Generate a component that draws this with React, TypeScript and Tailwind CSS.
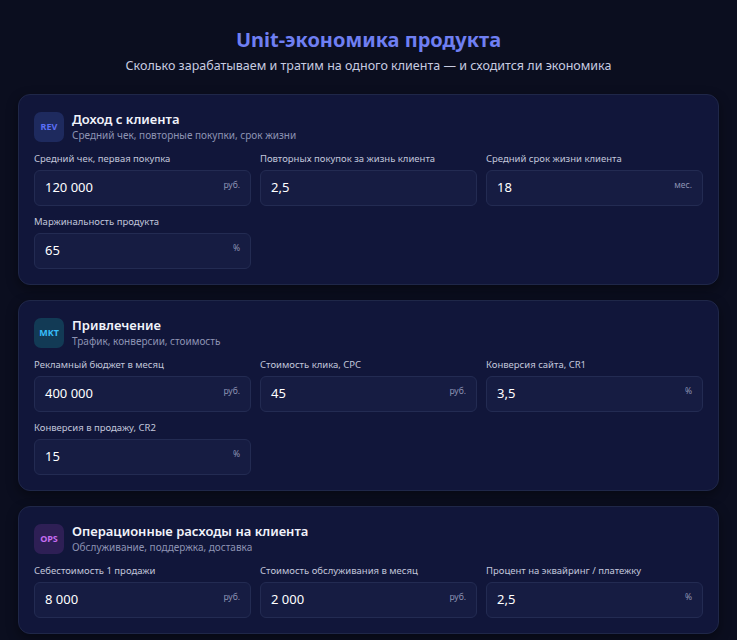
type Field = { label: string; value: string; unit?: string };
type Section = { tag: string; tagClass: string; title: string; sub: string; fields: Field[] };

const sections: Section[] = [
  {
    tag: "REV",
    tagClass: "bg-[#1e2a5e] text-[#5b6ef5]",
    title: "Доход с клиента",
    sub: "Средний чек, повторные покупки, срок жизни",
    fields: [
      { label: "Средний чек, первая покупка", value: "120 000", unit: "руб." },
      { label: "Повторных покупок за жизнь клиента", value: "2,5" },
      { label: "Средний срок жизни клиента", value: "18", unit: "мес." },
      { label: "Маржинальность продукта", value: "65", unit: "%" },
    ],
  },
  {
    tag: "MKT",
    tagClass: "bg-[#123a55] text-[#38bdf8]",
    title: "Привлечение",
    sub: "Трафик, конверсии, стоимость",
    fields: [
      { label: "Рекламный бюджет в месяц", value: "400 000", unit: "руб." },
      { label: "Стоимость клика, CPC", value: "45", unit: "руб." },
      { label: "Конверсия сайта, CR1", value: "3,5", unit: "%" },
      { label: "Конверсия в продажу, CR2", value: "15", unit: "%" },
    ],
  },
  {
    tag: "OPS",
    tagClass: "bg-[#2e1f55] text-[#c56cf0]",
    title: "Операционные расходы на клиента",
    sub: "Обслуживание, поддержка, доставка",
    fields: [
      { label: "Себестоимость 1 продажи", value: "8 000", unit: "руб." },
      { label: "Стоимость обслуживания в месяц", value: "2 000", unit: "руб." },
      { label: "Процент на эквайринг / платежку", value: "2,5", unit: "%" },
    ],
  },
];

export default function App() {
  return (
    <div className="min-h-[640px] bg-[#0b0e1f] font-['Noto_Sans',sans-serif] text-white pb-6">
      <div className="pt-[27px] text-center">
        <h1 className="text-[20px] font-bold leading-[26px] text-[#6f7ff2]">Unit-экономика продукта</h1>
        <p className="mt-[4px] text-[12.5px] leading-[18px] text-[#c7cbe0]">
          Сколько зарабатываем и тратим на одного клиента — и сходится ли экономика
        </p>
      </div>
      <div className="mx-[18px] mt-[19px] flex flex-col gap-[15px]">
        {sections.map((s) => (
          <div
            key={s.tag}
            className="rounded-[12px] border border-[#1f2748] bg-[#11163a] px-[15px] pt-[16px] pb-[15px] shadow-[0_4px_12px_rgba(0,0,0,0.4)]"
          >
            <div className="flex items-center gap-[4px]">
              <div
                className={`flex h-[30px] w-[30px] items-center justify-center rounded-[7px] text-[9px] font-bold ${s.tagClass}`}
              >
                {s.tag}
              </div>
              <div className="ml-[4px]">
                <div className="text-[13px] font-semibold leading-[17px] text-[#f1f3fb]">{s.title}</div>
                <div className="text-[10px] leading-[15px] text-[#8d93b3]">{s.sub}</div>
              </div>
            </div>
            <div className="mt-[9px] grid grid-cols-3 gap-x-[9px] gap-y-[9px]">
              {s.fields.map((f) => (
                <div key={f.label}>
                  <div className="text-[9.5px] leading-[14px] text-[#c2c6da]">{f.label}</div>
                  <div className="mt-[4px] flex h-[36px] items-start justify-between rounded-[6px] border border-[#232b52] bg-[#161c42] px-[10px]">
                    <span className="self-center text-[13px] text-white">{f.value}</span>
                    {f.unit && <span className="mt-[8px] text-[8.5px] text-[#8d93b3]">{f.unit}</span>}
                  </div>
                </div>
              ))}
            </div>
          </div>
        ))}
      </div>
    </div>
  );
}
